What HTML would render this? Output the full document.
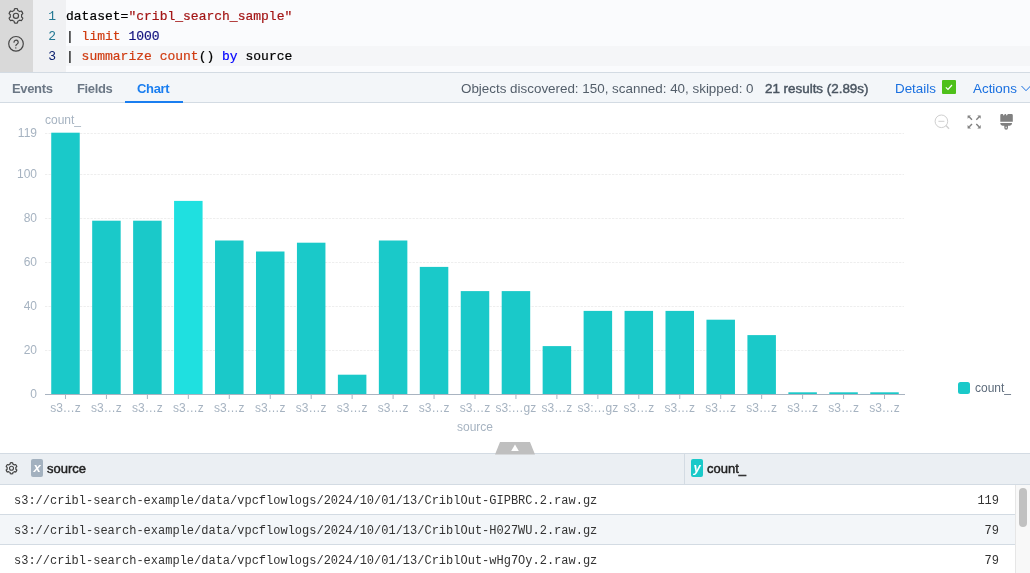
<!DOCTYPE html>
<html><head><meta charset="utf-8">
<style>
*{box-sizing:border-box;margin:0;padding:0}
html,body{width:1030px;height:573px;overflow:hidden;background:#fff;will-change:transform;font-family:"Liberation Sans",sans-serif}
.abs{position:absolute}
#side{left:0;top:0;width:33px;height:72px;background:#d9d9d9}
#gut{left:33px;top:0;width:33px;height:72px;background:#f0f1f3}
#code{left:66px;top:0;width:964px;height:72px;background:#fafbfd}
#hl{left:66px;top:46px;width:964px;height:20px;background:#f5f6f8}
#edb{left:0;top:72px;width:1030px;height:1px;background:#d3dbe3}
.ln{position:absolute;margin-top:1px;left:33px;width:23px;text-align:right;font-family:"Liberation Mono",monospace;font-size:13px;line-height:20px;color:#237893}
.cl{position:absolute;margin-top:1px;left:66px;font-family:"Liberation Mono",monospace;font-size:13px;line-height:20px;color:#000;white-space:pre;-webkit-text-stroke:0.2px currentColor}
#tabs{left:0;top:73px;width:1030px;height:29px;background:#f3f6f9}
#tabb{left:0;top:102px;width:1030px;height:1px;background:#d3dbe3}
.tab{position:absolute;top:74px;height:29px;line-height:29px;font-size:13px;font-weight:bold;color:#6b7785;letter-spacing:-0.35px}
.stat{position:absolute;top:74px;height:29px;line-height:29px;font-size:13px;color:#535e6a;white-space:nowrap}
#thead{left:0;top:453px;width:1030px;height:32px;background:#ebeff3;border-top:1px solid #d3dbe3;border-bottom:1px solid #d3dbe3}
.row{position:absolute;left:0;width:1015px;height:30px;border-bottom:1px solid #d3dbe3;font-family:"Liberation Mono",monospace;font-size:12px;color:#333}
.row span{position:absolute;left:14px;top:9px;line-height:14px;white-space:pre}
.row b{position:absolute;right:16px;top:9px;line-height:14px;font-weight:normal}
.badge{width:12px;height:18px;border-radius:2px;color:#fff;font-style:italic;font-weight:bold;font-size:13px;line-height:18px;text-align:center}
.hd{top:454px;height:29px;line-height:29px;font-size:13px;font-weight:normal;color:#222;-webkit-text-stroke:0.45px #222}
</style></head><body>
<div class="abs" id="side"></div>
<div class="abs" id="gut"></div>
<div class="abs" id="code"></div>
<div class="abs" id="hl"></div>
<div class="abs" id="edb"></div>
<svg class="abs" style="left:0;top:0" width="33" height="72" viewBox="0 0 33 72">
<path d="M14.13,10.45 L14.44,8.76 A7.25,7.25 0 0 1 17.46,8.76 L17.77,10.45 A5.7,5.7 0 0 1 19.72,11.57 L21.34,11.00 A7.25,7.25 0 0 1 22.85,13.61 L21.54,14.72 A5.7,5.7 0 0 1 21.54,16.98 L22.85,18.09 A7.25,7.25 0 0 1 21.34,20.70 L19.72,20.13 A5.7,5.7 0 0 1 17.77,21.25 L17.46,22.94 A7.25,7.25 0 0 1 14.44,22.94 L14.13,21.25 A5.7,5.7 0 0 1 12.18,20.13 L10.56,20.70 A7.25,7.25 0 0 1 9.05,18.09 L10.36,16.98 A5.7,5.7 0 0 1 10.36,14.72 L9.05,13.61 A7.25,7.25 0 0 1 10.56,11.00 L12.18,11.57 A5.7,5.7 0 0 1 14.13,10.45Z" fill="none" stroke="#444" stroke-width="1.15" stroke-linejoin="round"/>
<circle cx="15.95" cy="15.85" r="2.6" fill="none" stroke="#474747" stroke-width="1.2"/>
<circle cx="16" cy="43.8" r="7.3" fill="none" stroke="#474747" stroke-width="1.2"/>
<path d="M14,42.2 a2.1,2.1 0 1 1 3.2,1.8 c-0.7,0.4 -1.1,0.9 -1.3,1.6" fill="none" stroke="#474747" stroke-width="1.2" stroke-linecap="round"/>
<circle cx="15.8" cy="47.9" r="0.7" fill="#474747"/>
</svg>
<div class="ln" style="top:6px">1</div>
<div class="ln" style="top:26px">2</div>
<div class="ln" style="top:46px;color:#0b216f">3</div>
<div class="cl" style="top:6px">dataset=<span style="color:#a31515">"cribl_search_sample"</span></div>
<div class="cl" style="top:26px">| <span style="color:#d03c12">limit</span> <span style="color:#13137f">1000</span></div>
<div class="cl" style="top:46px">| <span style="color:#d03c12">summarize</span> <span style="color:#d03c12">count</span>() <span style="color:#0000ff">by</span> source</div>

<div class="abs" id="tabs"></div>
<div class="abs" id="tabb"></div>
<div class="tab" style="left:12px">Events</div>
<div class="tab" style="left:77px">Fields</div>
<div class="tab" style="left:137px;color:#1a7ef0">Chart</div>
<div class="abs" style="left:125px;top:101px;width:58px;height:2px;background:#1a7ef0"></div>
<div class="stat" style="left:461px;font-size:13.4px">Objects discovered: 150, scanned: 40, skipped: 0</div>
<div class="stat" style="left:765px;font-size:13.4px;color:#4a5561;-webkit-text-stroke:0.45px #4a5561">21 results (2.89s)</div>
<div class="stat" style="left:895px;color:#1a70e0;font-size:13.4px">Details</div>
<div class="abs" style="left:942px;top:80px;width:14px;height:14px;background:#4ec01a;border-radius:1px"></div>
<svg class="abs" style="left:942px;top:80px" width="14" height="14"><path d="M3.8,7.4 L6,9.4 L10,5" fill="none" stroke="#fff" stroke-width="1.2"/></svg>
<svg class="abs" style="left:1018px;top:83px" width="12" height="10"><path d="M3.5,3 L8,7.7 L12.5,3" fill="none" stroke="#1a70e0" stroke-width="1"/></svg>
<div class="stat" style="left:973px;color:#1a70e0;font-size:13.4px">Actions</div>

<!--CHART-->
<svg class="abs" style="left:0;top:103px" width="1030" height="350" viewBox="0 103 1030 350">
<line x1="45" y1="350.5" x2="904" y2="350.5" stroke="#eeeeee" stroke-width="1" stroke-dasharray="2.3 1.2"/>
<line x1="45" y1="306.5" x2="904" y2="306.5" stroke="#eeeeee" stroke-width="1" stroke-dasharray="2.3 1.2"/>
<line x1="45" y1="262.5" x2="904" y2="262.5" stroke="#eeeeee" stroke-width="1" stroke-dasharray="2.3 1.2"/>
<line x1="45" y1="218.5" x2="904" y2="218.5" stroke="#eeeeee" stroke-width="1" stroke-dasharray="2.3 1.2"/>
<line x1="45" y1="174.5" x2="904" y2="174.5" stroke="#eeeeee" stroke-width="1" stroke-dasharray="2.3 1.2"/>
<line x1="45" y1="133.5" x2="904" y2="133.5" stroke="#eeeeee" stroke-width="1" stroke-dasharray="2.3 1.2"/>
<rect x="51.23" y="132.70" width="28.5" height="261.80" fill="#1ac9c9"/>
<rect x="92.18" y="220.70" width="28.5" height="173.80" fill="#1ac9c9"/>
<rect x="133.13" y="220.70" width="28.5" height="173.80" fill="#1ac9c9"/>
<rect x="174.08" y="200.90" width="28.5" height="193.60" fill="#1fe0e0"/>
<rect x="215.04" y="240.50" width="28.5" height="154.00" fill="#1ac9c9"/>
<rect x="255.99" y="251.50" width="28.5" height="143.00" fill="#1ac9c9"/>
<rect x="296.94" y="242.70" width="28.5" height="151.80" fill="#1ac9c9"/>
<rect x="337.89" y="374.70" width="28.5" height="19.80" fill="#1ac9c9"/>
<rect x="378.85" y="240.50" width="28.5" height="154.00" fill="#1ac9c9"/>
<rect x="419.80" y="266.90" width="28.5" height="127.60" fill="#1ac9c9"/>
<rect x="460.75" y="291.10" width="28.5" height="103.40" fill="#1ac9c9"/>
<rect x="501.70" y="291.10" width="28.5" height="103.40" fill="#1ac9c9"/>
<rect x="542.65" y="346.10" width="28.5" height="48.40" fill="#1ac9c9"/>
<rect x="583.61" y="310.90" width="28.5" height="83.60" fill="#1ac9c9"/>
<rect x="624.56" y="310.90" width="28.5" height="83.60" fill="#1ac9c9"/>
<rect x="665.51" y="310.90" width="28.5" height="83.60" fill="#1ac9c9"/>
<rect x="706.46" y="319.70" width="28.5" height="74.80" fill="#1ac9c9"/>
<rect x="747.42" y="335.10" width="28.5" height="59.40" fill="#1ac9c9"/>
<rect x="788.37" y="392.30" width="28.5" height="2.20" fill="#1ac9c9"/>
<rect x="829.32" y="392.30" width="28.5" height="2.20" fill="#1ac9c9"/>
<rect x="870.27" y="392.30" width="28.5" height="2.20" fill="#1ac9c9"/>
<line x1="45" y1="394.5" x2="905" y2="394.5" stroke="#a9b4c1" stroke-width="1"/>
<line x1="65.48" y1="394.5" x2="65.48" y2="399" stroke="#a9b4c1" stroke-width="1"/>
<line x1="106.43" y1="394.5" x2="106.43" y2="399" stroke="#a9b4c1" stroke-width="1"/>
<line x1="147.38" y1="394.5" x2="147.38" y2="399" stroke="#a9b4c1" stroke-width="1"/>
<line x1="188.33" y1="394.5" x2="188.33" y2="399" stroke="#a9b4c1" stroke-width="1"/>
<line x1="229.29" y1="394.5" x2="229.29" y2="399" stroke="#a9b4c1" stroke-width="1"/>
<line x1="270.24" y1="394.5" x2="270.24" y2="399" stroke="#a9b4c1" stroke-width="1"/>
<line x1="311.19" y1="394.5" x2="311.19" y2="399" stroke="#a9b4c1" stroke-width="1"/>
<line x1="352.14" y1="394.5" x2="352.14" y2="399" stroke="#a9b4c1" stroke-width="1"/>
<line x1="393.10" y1="394.5" x2="393.10" y2="399" stroke="#a9b4c1" stroke-width="1"/>
<line x1="434.05" y1="394.5" x2="434.05" y2="399" stroke="#a9b4c1" stroke-width="1"/>
<line x1="475.00" y1="394.5" x2="475.00" y2="399" stroke="#a9b4c1" stroke-width="1"/>
<line x1="515.95" y1="394.5" x2="515.95" y2="399" stroke="#a9b4c1" stroke-width="1"/>
<line x1="556.90" y1="394.5" x2="556.90" y2="399" stroke="#a9b4c1" stroke-width="1"/>
<line x1="597.86" y1="394.5" x2="597.86" y2="399" stroke="#a9b4c1" stroke-width="1"/>
<line x1="638.81" y1="394.5" x2="638.81" y2="399" stroke="#a9b4c1" stroke-width="1"/>
<line x1="679.76" y1="394.5" x2="679.76" y2="399" stroke="#a9b4c1" stroke-width="1"/>
<line x1="720.71" y1="394.5" x2="720.71" y2="399" stroke="#a9b4c1" stroke-width="1"/>
<line x1="761.67" y1="394.5" x2="761.67" y2="399" stroke="#a9b4c1" stroke-width="1"/>
<line x1="802.62" y1="394.5" x2="802.62" y2="399" stroke="#a9b4c1" stroke-width="1"/>
<line x1="843.57" y1="394.5" x2="843.57" y2="399" stroke="#a9b4c1" stroke-width="1"/>
<line x1="884.52" y1="394.5" x2="884.52" y2="399" stroke="#a9b4c1" stroke-width="1"/>
<g font-family="Liberation Sans" font-size="12" fill="#a6b3c1" text-anchor="middle">
<text x="65.48" y="412">s3…z</text>
<text x="106.43" y="412">s3…z</text>
<text x="147.38" y="412">s3…z</text>
<text x="188.33" y="412">s3…z</text>
<text x="229.29" y="412">s3…z</text>
<text x="270.24" y="412">s3…z</text>
<text x="311.19" y="412">s3…z</text>
<text x="352.14" y="412">s3…z</text>
<text x="393.10" y="412">s3…z</text>
<text x="434.05" y="412">s3…z</text>
<text x="475.00" y="412">s3…z</text>
<text x="515.95" y="412">s3:…gz</text>
<text x="556.90" y="412">s3…z</text>
<text x="597.86" y="412">s3:…gz</text>
<text x="638.81" y="412">s3…z</text>
<text x="679.76" y="412">s3…z</text>
<text x="720.71" y="412">s3…z</text>
<text x="761.67" y="412">s3…z</text>
<text x="802.62" y="412">s3…z</text>
<text x="843.57" y="412">s3…z</text>
<text x="884.52" y="412">s3…z</text>
<text x="475" y="431">source</text>
</g>
<g font-family="Liberation Sans" font-size="12" fill="#a6b3c1" text-anchor="end">
<text x="37" y="397.8">0</text>
<text x="37" y="353.8">20</text>
<text x="37" y="309.8">40</text>
<text x="37" y="265.8">60</text>
<text x="37" y="221.8">80</text>
<text x="37" y="177.8">100</text>
<text x="37" y="136.8">119</text>
</g>
<text x="45" y="124" font-family="Liberation Sans" font-size="12" fill="#a6b3c1">count_</text>
<rect x="958" y="382" width="12" height="12" rx="2.5" fill="#1ac9c9"/>
<text x="975" y="392" font-family="Liberation Sans" font-size="12" fill="#5d6b7b">count_</text>
</svg>
<!--/CHART-->
<svg class="abs" style="left:925px;top:105px" width="100" height="35" viewBox="925 105 100 35">
<circle cx="941.4" cy="121.3" r="6.3" fill="none" stroke="#cfcfcf" stroke-width="1"/>
<line x1="938.4" y1="121.3" x2="944.4" y2="121.3" stroke="#cfcfcf" stroke-width="1"/>
<line x1="946" y1="125.5" x2="949" y2="128.8" stroke="#cfcfcf" stroke-width="1.3"/>
<g stroke="#808080" stroke-width="1.4" fill="none">
<path d="M969.3,117 L972,119.8 M979,117 L976.3,119.8 M969.3,126.8 L972,124 M979,126.8 L976.3,124"/>
</g>
<g fill="#808080">
<path d="M967.6,115.4 h3.4 l-3.4,3.4z M980.7,115.4 h-3.4 l3.4,3.4z M967.6,128.4 h3.4 l-3.4,-3.4z M980.7,128.4 h-3.4 l3.4,-3.4z"/>
</g>
<path d="M1000.3,121.7 V115.2 q0,-1.2 1.2,-1.2 h1.3 l1,1.7 l1,-1.7 h1 l1,1.7 l1,-1.7 h3.8 q1.2,0 1.2,1.2 V121.7 Z" fill="#808080"/>
<path d="M1000.3,123 H1012 V123.6 q-0.2,1.8 -2.2,2.1 H1008 v2.15 a1.85,1.85 0 0 1 -3.7,0 v-2.15 H1002.5 q-2,-0.3 -2.2,-2.1 Z" fill="#808080"/>
<ellipse cx="1006.15" cy="127.4" rx="0.55" ry="0.9" fill="#fff"/>
</svg>

<div class="abs" id="thead"></div>
<svg class="abs" style="left:0;top:453px" width="20" height="32" viewBox="0 453 20 32">
<path d="M10.10,464.13 L10.34,462.82 A5.6,5.6 0 0 1 12.66,462.82 L12.90,464.13 A4.4,4.4 0 0 1 14.41,465.00 L15.66,464.55 A5.6,5.6 0 0 1 16.83,466.57 L15.81,467.43 A4.4,4.4 0 0 1 15.81,469.17 L16.83,470.03 A5.6,5.6 0 0 1 15.66,472.05 L14.41,471.60 A4.4,4.4 0 0 1 12.90,472.47 L12.66,473.78 A5.6,5.6 0 0 1 10.34,473.78 L10.10,472.47 A4.4,4.4 0 0 1 8.59,471.60 L7.34,472.05 A5.6,5.6 0 0 1 6.17,470.03 L7.19,469.17 A4.4,4.4 0 0 1 7.19,467.43 L6.17,466.57 A5.6,5.6 0 0 1 7.34,464.55 L8.59,465.00 A4.4,4.4 0 0 1 10.10,464.13Z" fill="none" stroke="#444" stroke-width="1.2" stroke-linejoin="round"/>
<circle cx="11.5" cy="468.3" r="2" fill="none" stroke="#444" stroke-width="1.1"/>
</svg>
<div class="abs badge" style="left:31px;top:459px;background:#a3b1bf">x</div>
<div class="abs hd" style="left:47px">source</div>
<div class="abs" style="left:684px;top:454px;width:1px;height:30px;background:#d3dbe3"></div>
<div class="abs badge" style="left:691px;top:459px;background:#1ac9c9">y</div>
<div class="abs hd" style="left:707px">count_</div>
<svg class="abs" style="left:490px;top:440px" width="50" height="15" viewBox="490 440 50 15">
<path d="M500,442 H530 L535,454.5 H495 Z" fill="#bfbfbf"/>
<path d="M515,444.5 L518.8,451 H511.2 Z" fill="#fff"/>
</svg>

<div class="row" style="top:485px"><span>s3://cribl-search-example/data/vpcflowlogs/2024/10/01/13/CriblOut-GIPBRC.2.raw.gz</span><b>119</b></div>
<div class="row" style="top:515px;background:#f3f6f9"><span>s3://cribl-search-example/data/vpcflowlogs/2024/10/01/13/CriblOut-H027WU.2.raw.gz</span><b>79</b></div>
<div class="row" style="top:545px"><span>s3://cribl-search-example/data/vpcflowlogs/2024/10/01/13/CriblOut-wHg7Oy.2.raw.gz</span><b>79</b></div>
<div class="abs" style="left:1015px;top:485px;width:15px;height:88px;background:#f8f8f8;border-left:1px solid #e6e6e6"></div>
<div class="abs" style="left:1019px;top:488px;width:8px;height:39px;background:#c1c1c1;border-radius:4px"></div>
</body></html>
